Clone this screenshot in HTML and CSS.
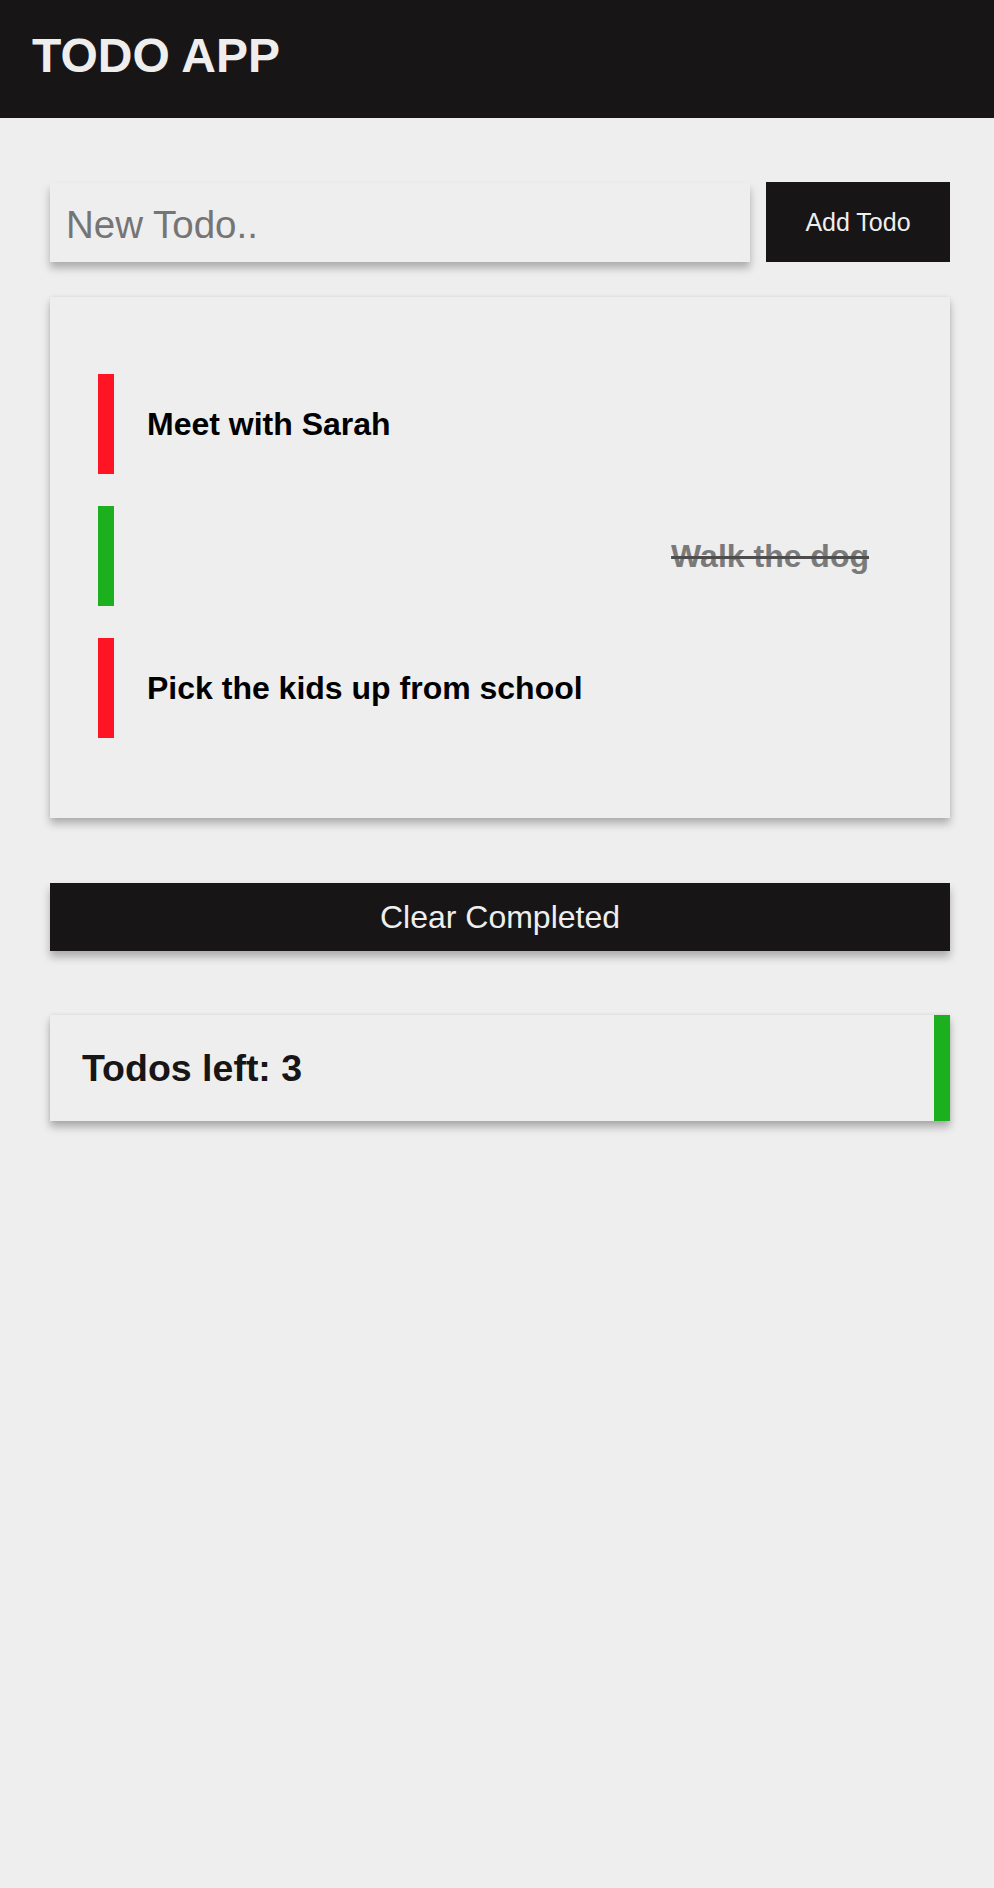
FILE: index.html
```html
<!DOCTYPE html>
<html lang="en">
<head>
<meta charset="utf-8">
<title>Todo App</title>
<link rel="stylesheet" href="styles.css">
</head>
<body>
<header class="app-header">
  <h1 class="app-title">TODO APP</h1>
</header>
<main class="container">
  <form class="todo-form">
    <input class="todo-input" type="text" placeholder="New Todo..">
    <button class="add-btn" type="button">Add Todo</button>
  </form>
  <section class="todo-card">
    <ul class="todo-list">
      <li class="todo-item pending"><span class="todo-bar"></span><span class="todo-text">Meet with Sarah</span></li>
      <li class="todo-item done"><span class="todo-bar"></span><span class="todo-text">Walk the dog</span></li>
      <li class="todo-item pending"><span class="todo-bar"></span><span class="todo-text">Pick the kids up from school</span></li>
    </ul>
  </section>
  <button class="clear-btn" type="button">Clear Completed</button>
  <section class="count-card">
    <span class="count-text">Todos left: 3</span>
    <span class="count-bar"></span>
  </section>
</main>
</body>
</html>
```

FILE: styles.css
```css
* { box-sizing: border-box; }
html, body { margin: 0; padding: 0; }
body {
  background: #eeeeee;
  font-family: "Liberation Sans", Arial, Helvetica, sans-serif;
  min-height: 1888px;
}
.app-header {
  background: #171516;
  height: 118px;
  display: flex;
  align-items: center;
  padding-left: 32px;
}
.app-title {
  margin: 0;
  color: #eeeeee;
  font-size: 48px;
  font-weight: 700;
  line-height: 1;
  position: relative;
  top: -3px;
}
.container {
  padding: 64px 44px 0 50px;
  width: 994px;
}
.todo-form {
  display: flex;
  gap: 16px;
  height: 80px;
  align-items: stretch;
  margin: 0;
}
.todo-input {
  flex: 1;
  border: none;
  outline: none;
  background: #eeeeee;
  font-family: "Liberation Sans", Arial, sans-serif;
  font-size: 38.5px;
  padding: 4px 0 0 16px;
  color: #222;
  box-shadow: 0 6px 8px rgba(0, 0, 0, 0.28);
  margin-top: 1px;
}
.todo-input::placeholder { color: #757575; }
.add-btn {
  width: 184px;
  border: none;
  background: #171516;
  color: #eeeeee;
  font-family: "Liberation Sans", Arial, sans-serif;
  font-size: 25px;
  padding: 0;
}
.todo-card {
  margin-top: 35px;
  height: 521px;
  background: #eeeeee;
  box-shadow: 0 6px 8px rgba(0, 0, 0, 0.25), 0 0 4px rgba(0, 0, 0, 0.08);
  padding: 77px 48px 0 48px;
}
.todo-list {
  list-style: none;
  margin: 0;
  padding: 0;
  display: flex;
  flex-direction: column;
  gap: 32px;
}
.todo-item {
  height: 100px;
  display: flex;
  align-items: center;
  gap: 33px;
  padding-right: 33px;
}
.todo-bar {
  width: 16px;
  height: 100px;
  flex: none;
}
.pending .todo-bar { background: #ff1423; }
.done .todo-bar { background: #1cb01f; }
.todo-text {
  font-size: 32px;
  font-weight: 700;
  color: #000;
}
.done .todo-text {
  margin-left: auto;
  color: #7a7a7a;
  text-decoration: line-through;
  text-decoration-color: #4d4d4d;
  text-decoration-thickness: 3px;
}
.clear-btn {
  display: block;
  width: 900px;
  height: 68px;
  margin-top: 65px;
  border: none;
  background: #171516;
  color: #eeeeee;
  font-family: "Liberation Sans", Arial, sans-serif;
  font-size: 32px;
  padding: 0;
  box-shadow: 0 6px 8px rgba(0, 0, 0, 0.28);
}
.count-card {
  margin-top: 64px;
  height: 106px;
  display: flex;
  align-items: center;
  justify-content: space-between;
  background: #eeeeee;
  box-shadow: 0 6px 8px rgba(0, 0, 0, 0.28), 0 0 4px rgba(0, 0, 0, 0.08);
  padding-left: 32px;
}
.count-text {
  font-size: 37.5px;
  font-weight: 700;
  color: #171516;
}
.count-bar {
  width: 16px;
  align-self: stretch;
  background: #1cb01f;
}
```
